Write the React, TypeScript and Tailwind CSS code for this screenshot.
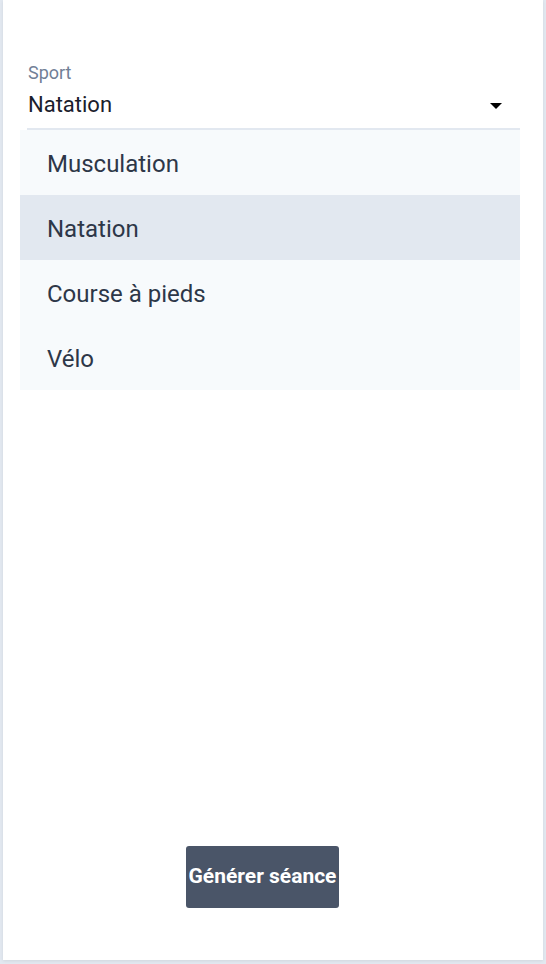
import React from "react";

const options = ["Musculation", "Natation", "Course à pieds", "Vélo"];

export default function App() {
  const selected = "Natation";

  return (
    <div
      className="min-h-screen bg-[#e2e8f0] pl-[3px] pr-[3px] pb-[4px]"
      style={{ fontFamily: "Roboto, 'Liberation Sans', sans-serif" }}
    >
      <div className="flex h-[960px] flex-col bg-white shadow-[0_1px_3px_rgba(0,0,0,0.08)]">
        <div className="relative mt-[61px] ml-[24px] mr-[23px]">
          <label className="block pl-[1px] text-[18px] leading-[24px] text-[#718096]">
            Sport
          </label>
          <div className="mt-[7px] flex items-center justify-between border-b-2 border-[#e2e8f0] pl-[1px] pr-[18px] pb-[10px]">
            <span className="text-[22px] leading-[26px] text-[#1a202c]">
              {selected}
            </span>
            <svg width="12" height="6" viewBox="0 0 12 6" className="mt-[1px]">
              <path d="M0 0h12L6 6z" fill="#000" />
            </svg>
          </div>

          <ul className="absolute top-full -left-[7px] right-0 bg-[#f7fafc]">
            {options.map((o) => (
              <li
                key={o}
                className={`flex h-[65px] items-center pt-[2px] pl-[27px] text-[24px] leading-[28px] text-[#2d3748] ${
                  o === selected ? "bg-[#e2e8f0]" : ""
                }`}
              >
                {o}
              </li>
            ))}
          </ul>
        </div>

        <div className="mt-auto mb-[52px] ml-[183px]">
          <button className="h-[62px] w-[153px] rounded-[3px] bg-[#4a5568] text-[21px] font-bold text-white">
            Générer séance
          </button>
        </div>
      </div>
    </div>
  );
}
